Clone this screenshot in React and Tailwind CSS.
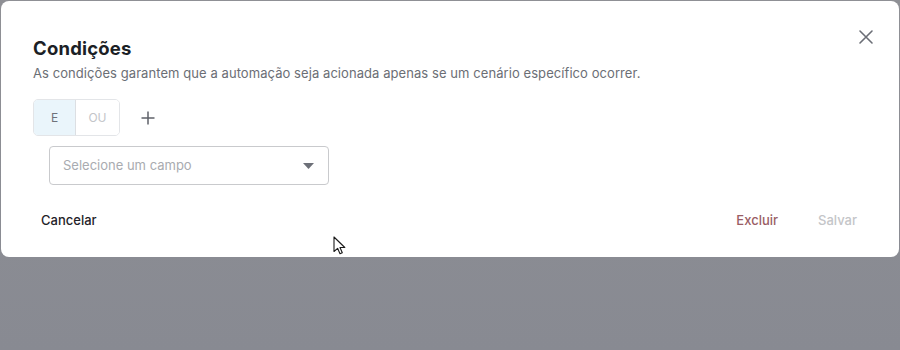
import React from "react";

const CloseIcon = () => (
  <svg width="16" height="16" viewBox="0 0 16 16" fill="none">
    <path d="M2 2L14 14M14 2L2 14" stroke="#6b6e76" strokeWidth="1.6" strokeLinecap="round" />
  </svg>
);

const PlusIcon = () => (
  <svg width="16" height="16" viewBox="0 0 16 16" fill="none">
    <path d="M8 1.5V14.5M1.5 8H14.5" stroke="#5f626a" strokeWidth="1.5" />
  </svg>
);

const Cursor = () => (
  <svg width="14" height="20" viewBox="0 0 14 20" fill="none">
    <path
      d="M1 1V15.5L4.6 12.3L7 17.8L9.3 16.8L7 11.5H11.8Z"
      fill="#ffffff"
      stroke="#1a1a1a"
      strokeWidth="1.1"
      strokeLinejoin="round"
    />
  </svg>
);

export default function App() {
  return (
    <div
      className="relative w-[900px] h-[350px] overflow-hidden bg-gradient-to-b from-[#8f9095] to-[#888a92] pt-px px-px"
      style={{ fontFamily: "Inter, 'Noto Sans', sans-serif" }}
    >
      <div className="relative bg-white rounded-lg h-[256px] w-[898px]">
        <button className="absolute right-[25px] top-[28px] p-0">
          <CloseIcon />
        </button>

        <div className="pl-8 pt-[35px]">
          <h2 className="text-[18.5px] font-bold text-[#1c1f26] leading-[24px] tracking-[0.2px]">
            Condições
          </h2>
          <p className="mt-[4px] text-[13px] text-[#6b6e75] leading-[18px] tracking-[0.07px]">
            As condições garantem que a automação seja acionada apenas se um cenário específico ocorrer.
          </p>

          <div className="mt-[17px] flex items-center">
            <div className="flex h-[37px] rounded-[5px] border border-[#e3e5e8] overflow-hidden">
              <button className="w-[42px] bg-[#eaf5fb] text-[12px] text-[#6f727a] border-r border-[#dcdfe3]">
                E
              </button>
              <button className="w-[43px] bg-white text-[12px] text-[#c3c5c9]">
                OU
              </button>
            </div>
            <button className="ml-[20px]">
              <PlusIcon />
            </button>
          </div>

          <div className="mt-[10px] ml-[16px] w-[280px] h-[39px] rounded-[4px] border border-[#c9cacd] flex items-center justify-between pl-[13px] pr-[14px]">
            <span className="text-[13px] text-[#a9abb0]">Selecione um campo</span>
            <svg width="11" height="6" viewBox="0 0 11 6">
              <path d="M0 0H11L5.5 6Z" fill="#6d7078" />
            </svg>
          </div>
        </div>

        <div className="mt-[21px] flex items-center justify-between pl-[32px] pr-[34px]">
          <button className="px-2 h-[30px] text-[13px] font-medium text-[#1f2229]">
            Cancelar
          </button>
          <div className="flex items-center gap-[24px]">
            <button className="px-2 h-[30px] text-[13px] font-medium text-[#9a5d64]">
              Excluir
            </button>
            <button className="px-2 h-[30px] text-[13px] font-medium text-[#c4c5c8]">
              Salvar
            </button>
          </div>
        </div>
      </div>

      <div className="absolute left-[333px] top-[236px]">
        <Cursor />
      </div>
    </div>
  );
}
